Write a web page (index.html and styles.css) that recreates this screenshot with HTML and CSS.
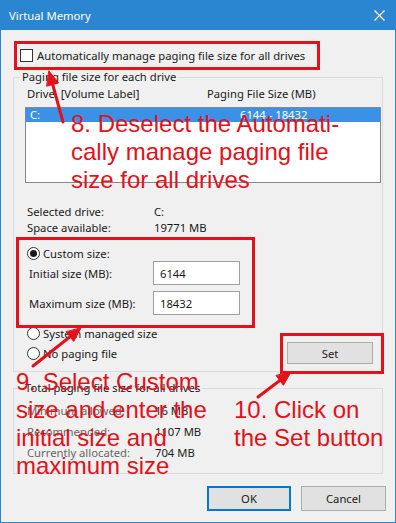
FILE: index.html
```html
<!DOCTYPE html>
<html lang="en">
<head>
    <meta charset="UTF-8">
    <meta name="viewport" content="width=device-width, initial-scale=1.0">
    <title>Virtual Memory</title>
    <link rel="stylesheet" href="styles.css">
</head>
<body>
    <div class="window">
        <div class="titlebar">
            <span class="title">Virtual Memory</span>
            <svg class="close" width="11" height="11" viewBox="0 0 11 11">
                <path d="M0.5 0.5 L10.5 10.5 M10.5 0.5 L0.5 10.5" stroke="#fff" stroke-width="1.2" fill="none"/>
            </svg>
        </div>

        <div class="content">
            <label class="auto-row">
                <span class="checkbox"></span>
                <span>Automatically manage paging file size for all drives</span>
            </label>

            <fieldset class="group drives">
                <legend>Paging file size for each drive</legend>
                <div class="list-head">
                    <span class="col-drive">Drive&nbsp; [Volume Label]</span>
                    <span>Paging File Size (MB)</span>
                </div>
                <div class="listbox">
                    <div class="list-row selected">
                        <span class="col-size">C:</span>
                        <span>6144 - 18432</span>
                    </div>
                </div>

                <div class="info">
                    <span>Selected drive:</span><span>C:</span>
                    <span>Space available:</span><span>19771 MB</span>
                </div>

                <div class="radio-row"><span class="radio checked"></span>Custom size:</div>
                <div class="size-row">
                    <span class="size-label">Initial size (MB):</span>
                    <input class="size-input" type="text" value="6144">
                </div>
                <div class="size-row max">
                    <span class="size-label">Maximum size (MB):</span>
                    <input class="size-input" type="text" value="18432">
                </div>

                <div class="mode-row">
                    <div class="mode-options">
                        <div class="radio-row"><span class="radio"></span>System managed size</div>
                        <div class="radio-row"><span class="radio"></span>No paging file</div>
                    </div>
                    <button class="btn set">Set</button>
                </div>
            </fieldset>

            <fieldset class="group total">
                <legend>Total paging file size for all drives</legend>
                <div class="totals">
                    <span class="t-label">Minimum allowed:</span><span>16 MB</span>
                    <span class="t-label">Recommended:</span><span>1107 MB</span>
                    <span class="t-label">Currently allocated:</span><span>704 MB</span>
                </div>
            </fieldset>

            <div class="actions">
                <button class="btn default">OK</button>
                <button class="btn">Cancel</button>
            </div>
        </div>

        <!-- tutorial markup drawn over the dialog -->
        <div class="mark mark-auto"></div>
        <div class="mark mark-custom"></div>
        <div class="mark mark-set"></div>

        <svg class="arrows" width="396" height="523" viewBox="0 0 396 523">
            <g stroke="#e4101a" stroke-width="3" stroke-linecap="round" fill="#e4101a">
                <line x1="63" y1="122" x2="52.7" y2="84.5"/>
                <polygon points="49,71 58.5,82.9 46.9,86.1" stroke-width="1"/>
                <line x1="33" y1="366" x2="70" y2="336.7"/>
                <polygon points="81,328 73.7,341.4 66.3,332" stroke-width="1"/>
                <line x1="258" y1="397" x2="279.8" y2="380.5"/>
                <polygon points="291,372 283.4,385.3 276.2,375.7" stroke-width="1"/>
            </g>
        </svg>

        <p class="note note-auto">8. Deselect the Automati-<br>cally manage paging file<br>size for all drives</p>
        <p class="note note-custom">9. Select Custom<br>size and enter the<br>initial size and<br>maximum size</p>
        <p class="note note-set">10. Click on<br>the Set button</p>
    </div>
</body>
</html>
```

FILE: styles.css
```css
body {
    margin: 0;
    font-family: "Noto Sans", "Open Sans", sans-serif;
    font-size: 11.25px;
    color: #1a1a1a;
    background: #f0f0f0;
}
.window {
    position: relative;
    width: 396px;
    height: 523px;
    box-sizing: border-box;
    border: 1px solid #2b86d2;
    border-top: none;
    background: #f0f0f0;
    overflow: hidden;
}
.titlebar {
    display: flex;
    align-items: center;
    justify-content: space-between;
    height: 30px;
    padding: 0 10px 0 8px;
    background: #2b86d2;
    color: #fff;
}
.title {
    font-size: 11.25px;
}
.content {
    padding: 0 12px 0 12px;
}
.auto-row {
    display: flex;
    align-items: center;
    height: 13px;
    margin-top: 19px;
    padding-left: 7px;
}
.checkbox {
    width: 11px;
    height: 11px;
    margin-right: 4px;
    border: 1px solid #333;
    background: #fff;
}
.group {
    margin: 0;
    padding: 0 1px 0 11px;
    border: 1px solid #dcdcdc;
    min-width: 0;
}
.group legend {
    padding: 0 2px;
    line-height: 16px;
}
.drives {
    margin-top: 7px;
    padding-bottom: 6px;
}
.drives legend {
    margin-left: -5px;
}
.list-head {
    display: flex;
    height: 16px;
    line-height: 16px;
    margin-top: 1px;
    padding-left: 2px;
}
.col-drive {
    width: 180px;
}
.listbox {
    height: 74px;
    margin-top: 5px;
    border: 1px solid #828790;
    background: #fff;
}
.list-row {
    display: flex;
    height: 14px;
    line-height: 14px;
    padding-left: 4px;
}
.list-row.selected {
    background: #3b91e5;
    color: #fff;
}
.col-size {
    width: 210px;
}
.info {
    display: grid;
    grid-template-columns: 127px 1fr;
    line-height: 16px;
    margin-top: 21px;
    padding-left: 2px;
}
.radio-row {
    display: flex;
    align-items: center;
    height: 16px;
    padding-left: 2px;
}
.info + .radio-row {
    margin-top: 9px;
}
.radio {
    position: relative;
    width: 11px;
    height: 11px;
    margin-right: 3px;
    border: 1px solid #333;
    border-radius: 50%;
    background: #fff;
}
.radio.checked::after {
    content: "";
    position: absolute;
    left: 2px;
    top: 2px;
    width: 7px;
    height: 7px;
    border-radius: 50%;
    background: #1a1a1a;
}
.size-row {
    display: flex;
    align-items: center;
    height: 24px;
    padding-left: 4px;
}
.size-row.max {
    margin-top: 6px;
}
.size-label {
    width: 124px;
}
.size-input {
    width: 87px;
    height: 24px;
    box-sizing: border-box;
    padding: 0 6px;
    border: 1px solid #a0a0a0;
    font: inherit;
    color: #1a1a1a;
    background: #fff;
}
.mode-row {
    display: flex;
    justify-content: space-between;
    height: 40px;
    margin-top: 10px;
}
.mode-options .radio-row + .radio-row {
    margin-top: 4px;
}
.btn {
    height: 22px;
    padding: 0;
    border: 1px solid #adadad;
    background: #e1e1e1;
    font: inherit;
    color: #1a1a1a;
}
.btn.set {
    width: 86px;
    margin-top: 17px;
    margin-right: 8px;
}
.total {
    margin-top: 8px;
    padding-bottom: 10px;
}
.total legend {
    margin-left: -2px;
}
.totals {
    display: grid;
    grid-template-columns: 128px 1fr;
    grid-auto-rows: 21px;
    align-items: center;
    margin-top: 4px;
    padding-left: 2px;
    color: #222;
}
.t-label {
    color: #666;
}
.actions {
    display: flex;
    justify-content: flex-end;
    gap: 10px;
    margin-top: 12px;
    margin-right: -3px;
}
.actions .btn {
    width: 85px;
    height: 25px;
}
.actions .btn.default {
    width: 84px;
    border-color: #0078d7;
    box-shadow: inset 0 0 0 1px #0078d7;
}

/* red tutorial marks over the dialog */
.mark {
    position: absolute;
    box-sizing: border-box;
    border: 3px solid #e4101a;
}
.mark-auto {
    left: 13px;
    top: 41px;
    width: 306px;
    height: 29px;
}
.mark-custom {
    left: 15px;
    top: 237px;
    width: 239px;
    height: 91px;
}
.mark-set {
    left: 279px;
    top: 333px;
    width: 104px;
    height: 41px;
}
.arrows {
    position: absolute;
    left: -1px;
    top: 0;
}
.note {
    position: absolute;
    margin: 0;
    font-family: "Liberation Sans", Arial, sans-serif;
    font-size: 24px;
    line-height: 28px;
    color: #e4101a;
    white-space: nowrap;
}
.note-auto {
    left: 70px;
    top: 110px;
}
.note-custom {
    left: 15px;
    top: 368px;
}
.note-set {
    left: 233px;
    top: 396px;
}
```
